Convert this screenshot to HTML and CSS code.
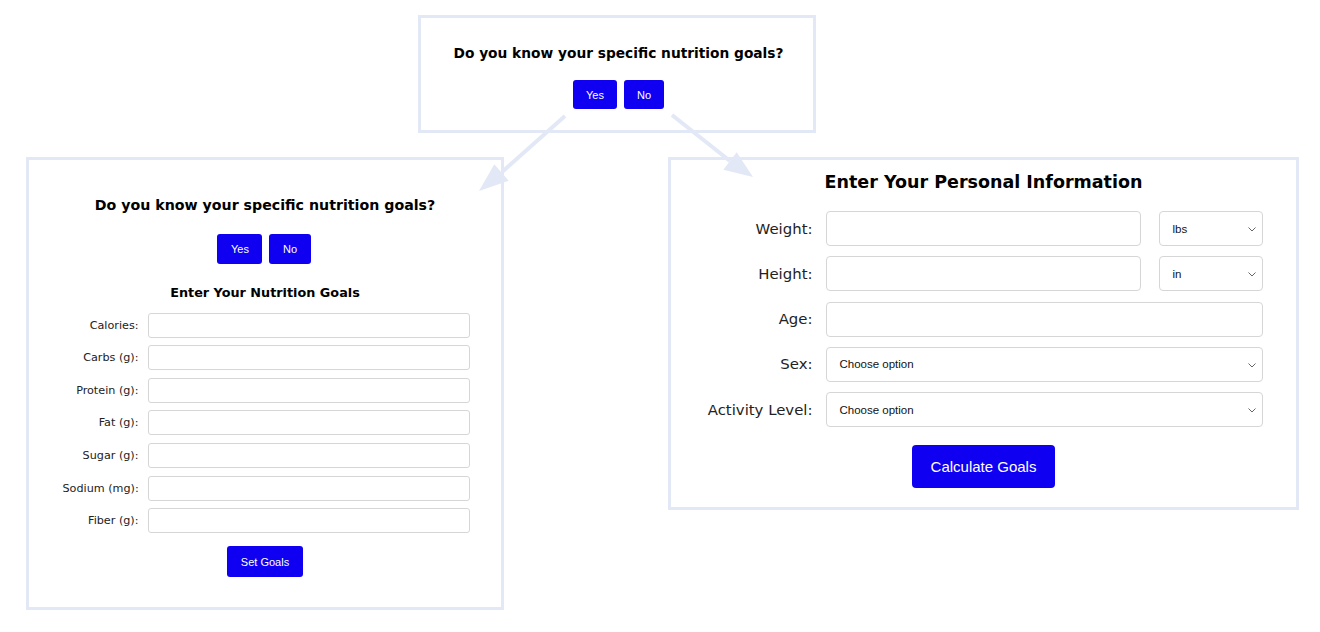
FILE: index.html
```html
<!DOCTYPE html>
<html lang="en">
<head>
<meta charset="utf-8">
<title>Nutrition goals flow</title>
<link rel="stylesheet" href="styles.css">
</head>
<body>
<div class="canvas">
  <section class="panel panel-top">
    <h2 class="q q-small">Do you know your specific nutrition goals?</h2>
    <div class="choice">
      <button class="btn btn-s">Yes</button>
      <button class="btn btn-s">No</button>
    </div>
  </section>

  <section class="panel panel-left">
    <h2 class="q">Do you know your specific nutrition goals?</h2>
    <div class="choice choice-left">
      <button class="btn btn-m">Yes</button>
      <button class="btn btn-m">No</button>
    </div>
    <h3 class="sub">Enter Your Nutrition Goals</h3>
    <div class="goals">
      <label>Calories:</label><input class="field-s" type="text">
      <label>Carbs (g):</label><input class="field-s" type="text">
      <label>Protein (g):</label><input class="field-s" type="text">
      <label>Fat (g):</label><input class="field-s" type="text">
      <label>Sugar (g):</label><input class="field-s" type="text">
      <label>Sodium (mg):</label><input class="field-s" type="text">
      <label>Fiber (g):</label><input class="field-s" type="text">
    </div>
    <div class="center">
      <button class="btn btn-set">Set Goals</button>
    </div>
  </section>

  <section class="panel panel-right">
    <h2 class="title">Enter Your Personal Information</h2>
    <div class="info">
      <label>Weight:</label>
      <div class="pair">
        <input class="field" type="text">
        <div class="sel unit"><span>lbs</span><svg viewBox="0 0 8 5" class="chev"><path d="M0.5 0.5 L4 4 L7.5 0.5"/></svg></div>
      </div>
      <label>Height:</label>
      <div class="pair">
        <input class="field" type="text">
        <div class="sel unit"><span>in</span><svg viewBox="0 0 8 5" class="chev"><path d="M0.5 0.5 L4 4 L7.5 0.5"/></svg></div>
      </div>
      <label>Age:</label>
      <input class="field" type="text">
      <label>Sex:</label>
      <div class="sel"><span>Choose option</span><svg viewBox="0 0 8 5" class="chev"><path d="M0.5 0.5 L4 4 L7.5 0.5"/></svg></div>
      <label>Activity Level:</label>
      <div class="sel"><span>Choose option</span><svg viewBox="0 0 8 5" class="chev"><path d="M0.5 0.5 L4 4 L7.5 0.5"/></svg></div>
    </div>
    <div class="center">
      <button class="btn btn-calc">Calculate Goals</button>
    </div>
  </section>

  <svg class="arrows" width="1320" height="632" viewBox="0 0 1320 632">
    <line x1="565" y1="116" x2="502" y2="172" />
    <polygon points="479,191 494.3,164.2 508.7,180.8" />
    <line x1="672" y1="115" x2="730" y2="161" />
    <polygon points="753,177 723.3,169.7 736.7,152.3" />
  </svg>
</div>
</body>
</html>
```

FILE: styles.css
```css
* { box-sizing: border-box; }

html, body {
  margin: 0;
  padding: 0;
  background: #ffffff;
}

.canvas {
  position: relative;
  width: 1320px;
  height: 632px;
  font-family: "DejaVu Sans", Verdana, sans-serif;
  color: #111;
}

.panel {
  position: absolute;
  border: 3px solid #e2e8f6;
  background: #fff;
  display: flex;
  flex-direction: column;
  align-items: center;
}

.panel-top {
  left: 418px;
  top: 15px;
  width: 398px;
  height: 118px;
  padding-top: 27px;
}

.panel-left {
  left: 26px;
  top: 157px;
  width: 478px;
  height: 453px;
  padding-top: 37px;
}

.panel-right {
  left: 668px;
  top: 157px;
  width: 631px;
  height: 353px;
  padding-top: 12px;
}

.q {
  margin: 0;
  font-size: 14.2px;
  line-height: 17px;
  font-weight: bold;
  color: #000;
}

.q-small {
  font-size: 13.75px;
  line-height: 16px;
  margin-left: 3px;
}

.choice {
  display: flex;
  gap: 7px;
  margin-top: 19px;
}

.panel-top .choice {
  margin-left: 3px;
}

.choice-left {
  margin-top: 19.5px;
  margin-left: -2px;
}

.btn {
  font-family: "Liberation Sans", Arial, sans-serif;
  background: #0f00f2;
  color: #fff;
  border: none;
  border-radius: 3px;
  padding: 0 13px;
  cursor: pointer;
}

.btn-s {
  height: 29px;
  font-size: 11px;
  padding: 0 13px;
}

.btn-m {
  height: 30px;
  font-size: 11px;
  padding: 0 13.5px;
}

.btn-set {
  height: 31px;
  font-size: 11px;
  padding: 0 13.5px;
  margin-top: 13px;
}

.btn-calc {
  height: 43px;
  font-size: 15px;
  padding: 0 18.5px;
  border-radius: 4px;
  margin-top: 18px;
}

.sub {
  margin: 21px 0 0;
  font-size: 12.8px;
  line-height: 16px;
  font-weight: bold;
  color: #000;
}

.goals {
  display: grid;
  grid-template-columns: 76px 322px;
  column-gap: 9px;
  row-gap: 7.67px;
  margin-top: 12px;
  margin-left: 2px;
  align-items: center;
}

.goals label {
  text-align: right;
  font-size: 11.2px;
  color: #222;
  white-space: nowrap;
}

.field-s {
  height: 25px;
  border: 1px solid #d6d6d6;
  border-radius: 3px;
  background: #fff;
  padding: 0 6px;
  font: inherit;
}

.center {
  display: flex;
  justify-content: center;
  width: 100%;
}

.title {
  margin: 0;
  font-size: 17.5px;
  line-height: 21px;
  font-weight: bold;
  color: #000;
}

.info {
  display: grid;
  grid-template-columns: 105px 437px;
  column-gap: 13px;
  row-gap: 10.25px;
  margin-top: 18px;
  margin-left: 3px;
  align-items: center;
}

.info label {
  text-align: right;
  font-size: 14.9px;
  color: #222;
  white-space: nowrap;
}

.pair {
  display: flex;
  gap: 18px;
}

.field {
  height: 35px;
  flex: 1;
  width: 100%;
  border: 1px solid #d6d6d6;
  border-radius: 4px;
  background: #fff;
  padding: 0 10px;
  font: inherit;
}

.sel {
  position: relative;
  height: 35px;
  border: 1px solid #d6d6d6;
  border-radius: 4px;
  background: #fff;
  display: flex;
  align-items: center;
  padding: 0 13px;
  font-family: "Liberation Sans", Arial, sans-serif;
  font-size: 11.5px;
  color: #111;
}

.sel.unit {
  width: 104px;
  flex: none;
}

.chev {
  position: absolute;
  right: 6px;
  top: 15px;
  width: 8px;
  height: 5px;
  fill: none;
  stroke: #666;
  stroke-width: 1;
}

.arrows {
  position: absolute;
  left: 0;
  top: 0;
  pointer-events: none;
}

.arrows line {
  stroke: #e2e8f6;
  stroke-width: 4;
}

.arrows polygon {
  fill: #e2e8f6;
}
```
